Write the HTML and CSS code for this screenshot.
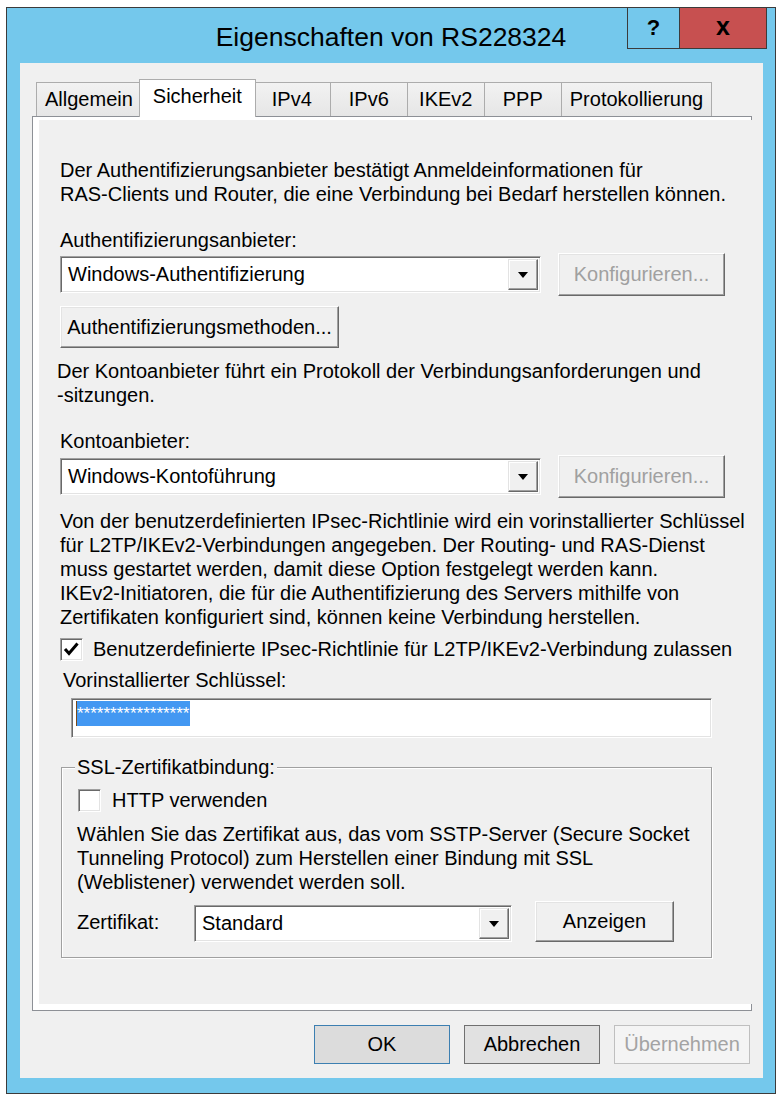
FILE: index.html
```html
<!DOCTYPE html>
<html lang="de">
<head>
  <meta charset="UTF-8">
  <meta name="viewport" content="width=device-width, initial-scale=1.0">
  <title>Eigenschaften von RS228324</title>
  <link rel="stylesheet" href="styles.css">
</head>
<body>

  <div class="window">
    <div class="titlebar">
      <div class="title">Eigenschaften von RS228324</div>
      <div class="caption-buttons">
        <div class="cap-btn help">?</div>
        <div class="cap-btn close">x</div>
      </div>
    </div>

    <div class="client">
      <!-- Tab strip -->
      <div class="tabs">
        <div class="tab">Allgemein</div>
        <div class="tab active">Sicherheit</div>
        <div class="tab">IPv4</div>
        <div class="tab">IPv6</div>
        <div class="tab">IKEv2</div>
        <div class="tab">PPP</div>
        <div class="tab">Protokollierung</div>
      </div>

      <div class="panel">
        <div class="page">
          <p class="text">Der Authentifizierungsanbieter bestätigt Anmeldeinformationen für<br>RAS-Clients und Router, die eine Verbindung bei Bedarf herstellen können.</p>

          <div class="label label-auth">Authentifizierungsanbieter:</div>
          <div class="row row-auth">
            <div class="combo combo-wide">
              <span class="combo-value">Windows-Authentifizierung</span>
              <span class="combo-arrow"></span>
            </div>
            <button class="btn3d btn-config" disabled>Konfigurieren...</button>
          </div>
          <button class="btn3d btn-methods">Authentifizierungsmethoden...</button>

          <p class="text text-account">Der Kontoanbieter führt ein Protokoll der Verbindungsanforderungen und<br>-sitzungen.</p>

          <div class="label label-account">Kontoanbieter:</div>
          <div class="row row-account">
            <div class="combo combo-wide">
              <span class="combo-value">Windows-Kontoführung</span>
              <span class="combo-arrow"></span>
            </div>
            <button class="btn3d btn-config" disabled>Konfigurieren...</button>
          </div>

          <p class="text text-ipsec">Von der benutzerdefinierten IPsec-Richtlinie wird ein vorinstallierter Schlüssel<br>für L2TP/IKEv2-Verbindungen angegeben. Der Routing- und RAS-Dienst<br>muss gestartet werden, damit diese Option festgelegt werden kann.<br>IKEv2-Initiatoren, die für die Authentifizierung des Servers mithilfe von<br>Zertifikaten konfiguriert sind, können keine Verbindung herstellen.</p>

          <div class="check-row check-ipsec">
            <span class="checkbox">
              <svg viewBox="0 0 21 21" width="21" height="21"><path d="M4 10 L8 14.5 L16.5 4.5" fill="none" stroke="#000" stroke-width="3"/></svg>
            </span>
            <span class="check-label">Benutzerdefinierte IPsec-Richtlinie für L2TP/IKEv2-Verbindung zulassen</span>
          </div>

          <div class="label label-key">Vorinstallierter Schlüssel:</div>
          <div class="field-key">
            <span class="selection">*****************</span>
          </div>

          <!-- SSL group box -->
          <div class="group">
            <span class="legend">SSL-Zertifikatbindung:</span>
            <div class="check-row check-http">
              <span class="checkbox"></span>
              <span class="check-label">HTTP verwenden</span>
            </div>
            <p class="text text-sstp">Wählen Sie das Zertifikat aus, das vom SSTP-Server (Secure Socket<br>Tunneling Protocol) zum Herstellen einer Bindung mit SSL<br>(Weblistener) verwendet werden soll.</p>
            <div class="row row-cert">
              <span class="cert-label">Zertifikat:</span>
              <div class="combo combo-cert">
                <span class="combo-value">Standard</span>
                <span class="combo-arrow"></span>
              </div>
              <button class="btn3d btn-show">Anzeigen</button>
            </div>
          </div>
        </div>
      </div>

      <div class="actions">
        <button class="btn btn-default">OK</button>
        <button class="btn btn-focus">Abbrechen</button>
        <button class="btn" disabled>Übernehmen</button>
      </div>
    </div>
  </div>

</body>
</html>
```

FILE: styles.css
```css
body {
  margin: 0;
  background-color: #fff;
  font-family: "Liberation Sans", Arial, sans-serif;
  font-size: 20px;
  color: #000;
}
button {
  font: inherit;
  color: inherit;
  padding: 0;
  margin: 0;
}
.window {
  box-sizing: border-box;
  width: 770px;
  height: 1087px;
  margin: 7px 0 0 6px;
  border: 1px solid #3b3b3b;
  background-color: #74c8ec;
  padding: 0 12px 15px 13px;
  display: flex;
  flex-direction: column;
}

/* title bar */
.titlebar {
  height: 55px;
  flex: none;
  margin: 0 -12px 0 -13px;
  display: grid;
  grid-template-columns: 1fr auto 1fr;
  align-items: start;
}
.title {
  grid-column: 2;
  font-size: 26.5px;
  line-height: 30px;
  margin-top: 14px;
  white-space: nowrap;
}
.caption-buttons {
  grid-column: 3;
  justify-self: end;
  display: flex;
  box-sizing: border-box;
  height: 42px;
  margin: -1px 8px 0 0;
  border: 1px solid #3b3b3b;
}
.cap-btn {
  display: flex;
  align-items: center;
  justify-content: center;
  font-weight: bold;
}
.help {
  width: 51px;
  border-right: 1px solid #3b3b3b;
  font-size: 22px;
}
.close {
  width: 86px;
  background-color: #c75050;
  font-size: 25px;
  padding-bottom: 4px;
  box-sizing: border-box;
}

/* client area */
.client {
  flex: 1;
  background-color: #f0f0f0;
  display: flex;
  flex-direction: column;
  padding: 0 11px 0 12px;
}
.tabs {
  display: flex;
  align-items: flex-end;
  height: 37px;
  margin: 16px 0 0 4px;
  position: relative;
  z-index: 1;
}
.tab {
  box-sizing: border-box;
  height: 34px;
  min-width: 78px;
  padding: 0 8px;
  margin-right: -1px;
  border: 1px solid #acacac;
  border-bottom: none;
  background: linear-gradient(#f2f2f2, #e6e6e6);
  line-height: 33px;
  text-align: center;
  white-space: nowrap;
}
.tab.active {
  height: 38px;
  margin: 0 -3px -1px -2px;
  padding: 0 13px 4px;
  background: #fff;
  position: relative;
  z-index: 2;
}
.panel {
  flex: 1;
  display: flex;
  border: 1px solid #8d9096;
  background-color: #fff;
  padding: 3px 7px 6px 6px;
}
.page {
  flex: 1;
  background-color: #f0f0f0;
  padding: 38px 18px 0 21px;
}

/* page content */
.text {
  margin: 0;
  line-height: 24px;
  white-space: nowrap;
}
.label {
  line-height: 24px;
}
.label-auth, .label-account {
  margin-top: 22px;
}
.text-account {
  margin: 11px 0 0 -3px;
}
.text-ipsec {
  margin-top: 11px;
}
.row {
  display: flex;
  align-items: center;
}
.row-auth {
  margin-top: 1px;
}
.row-account {
  margin-top: 2px;
}

.combo {
  box-sizing: border-box;
  display: flex;
  background-color: #fff;
  border: 1px solid;
  border-color: #a0a0a0 #fff #fff #a0a0a0;
  box-shadow: inset 1px 1px #696969, inset -1px -1px #e3e3e3;
  padding: 2px;
}
.combo-wide {
  width: 481px;
  height: 37px;
}
.combo-value {
  flex: 1;
  padding-left: 5px;
  line-height: 31px;
  white-space: nowrap;
}
.combo-arrow {
  box-sizing: border-box;
  width: 30px;
  display: flex;
  align-items: center;
  justify-content: center;
  background-color: #f0f0f0;
  border: 1px solid;
  border-color: #e3e3e3 #696969 #696969 #e3e3e3;
  box-shadow: inset -1px -1px #a0a0a0, inset 1px 1px #fff;
}
.combo-arrow::after {
  content: "";
  border-left: 5px solid transparent;
  border-right: 5px solid transparent;
  border-top: 6px solid #000;
}

.btn3d {
  box-sizing: border-box;
  background-color: #f0f0f0;
  border: 1px solid;
  border-color: #fff #696969 #696969 #fff;
  box-shadow: inset -1px -1px #a0a0a0, inset 1px 1px #e3e3e3;
  white-space: nowrap;
}
.btn3d:disabled {
  color: #a0a0a0;
}
.btn-config {
  width: 167px;
  height: 43px;
  margin-left: 17px;
}
.btn-methods {
  display: block;
  width: 279px;
  height: 42px;
  margin-top: 10px;
}

.check-row {
  display: flex;
  align-items: center;
}
.checkbox {
  box-sizing: border-box;
  width: 23px;
  height: 23px;
  display: flex;
  align-items: center;
  justify-content: center;
  background-color: #fff;
  border: 1px solid;
  border-color: #a0a0a0 #fff #fff #a0a0a0;
  box-shadow: inset 1px 1px #696969, inset -1px -1px #e3e3e3;
}
.check-ipsec {
  margin-top: 9px;
}
.check-ipsec .check-label {
  margin-left: 10px;
}
.label-key {
  margin: 7px 0 0 3px;
}
.field-key {
  box-sizing: border-box;
  width: 641px;
  height: 40px;
  margin: 6px 0 0 11px;
  padding: 2px 0 0 4px;
  background-color: #fff;
  border: 1px solid;
  border-color: #a0a0a0 #fff #fff #a0a0a0;
  box-shadow: inset 1px 1px #696969, inset -1px -1px #e3e3e3;
}
.selection {
  display: inline-block;
  height: 25px;
  padding-right: 1px;
  border-left: 1px solid #7a4a1a;
  background-color: #4398f2;
  color: #fff;
  font-size: 17px;
  line-height: 25px;
  vertical-align: top;
}

/* group box */
.group {
  width: 651px;
  box-sizing: border-box;
  margin: 29px 0 0 1px;
  padding: 0 16px 15px 15px;
  border: 1px solid #a0a0a0;
  box-shadow: inset 1px 1px #fff, 1px 1px #fff;
  display: flex;
  flex-direction: column;
}
.legend {
  align-self: flex-start;
  margin: -13px 0 0 -2px;
  padding: 0 2px;
  line-height: 24px;
  background-color: #f0f0f0;
}
.check-http {
  margin: 10px 0 0 1px;
}
.check-http .check-label {
  margin-left: 11px;
}
.text-sstp {
  margin-top: 10px;
}
.row-cert {
  margin-top: 7px;
  align-items: flex-end;
}
.cert-label {
  width: 117px;
  align-self: center;
  line-height: 24px;
}
.combo-cert {
  width: 318px;
  height: 37px;
}
.btn-show {
  width: 139px;
  height: 41px;
  margin-left: 23px;
}

/* dialog buttons */
.actions {
  display: flex;
  justify-content: flex-end;
  gap: 14px;
  margin: 14px 2px 14px 0;
}
.btn {
  box-sizing: border-box;
  width: 136px;
  height: 39px;
  background-color: #e1e1e1;
  border: 1px solid #adadad;
}
.btn-default {
  border-color: #3c7fb1;
  background-color: #dcdcdc;
}
.btn-focus {
  border-color: #707070;
}
.btn:disabled {
  background-color: #f4f4f4;
  border-color: #bfbfbf;
  color: #a3a3a3;
}
```
